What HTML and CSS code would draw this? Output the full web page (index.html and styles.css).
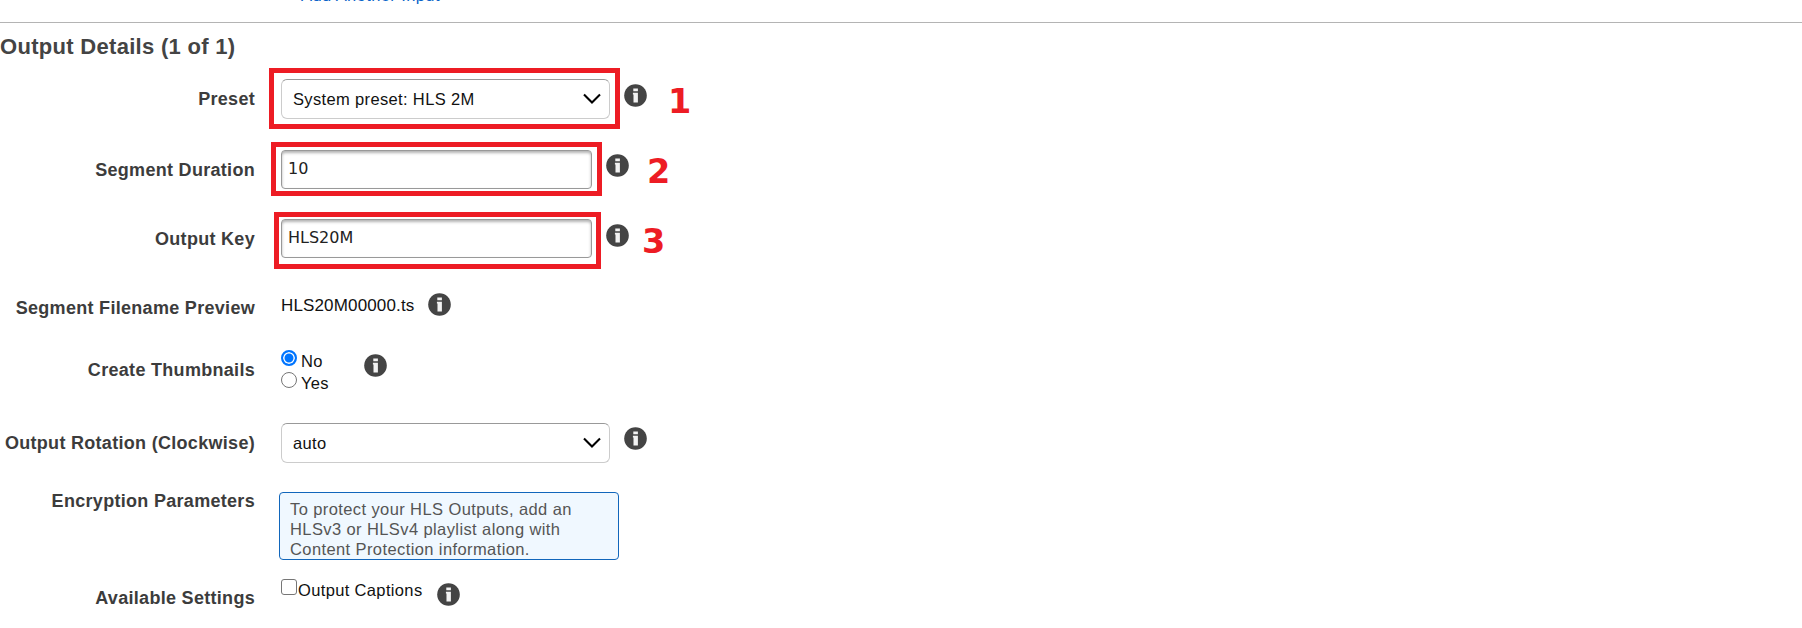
FILE: index.html
```html
<!DOCTYPE html>
<html lang="en">
<head>
<meta charset="utf-8">
<title>Output Details</title>
<link rel="stylesheet" href="styles.css">
</head>
<body>
<svg width="0" height="0" class="defs">
  <symbol id="info" viewBox="0 0 24 24">
    <circle cx="12" cy="12" r="11.8" fill="#444"/>
    <path d="M9.7 4.6h4.8v3H9.7zM9.3 9.2h5.2v10.2H9.9v-8.4h-.6z" fill="#f2f2f2"/>
  </symbol>
  <symbol id="chevron" viewBox="0 0 18 12">
    <path d="M1 1.5l8 8 8-8" fill="none" stroke="#000" stroke-width="2.1"/>
  </symbol>
</svg>
<header class="inputs"><a class="add-link">Add Another Input</a></header>
<main>
  <h2 class="title">Output Details (1 of 1)</h2>

  <div class="row preset">
    <label class="label">Preset</label>
    <div class="control">
      <div class="select"><span>System preset: HLS 2M</span><svg class="chevron"><use href="#chevron"/></svg></div>
      <svg class="info"><use href="#info"/></svg>
      <b class="step">1</b>
    </div>
    <i class="frame"></i>
  </div>

  <div class="row duration">
    <label class="label">Segment Duration</label>
    <div class="control">
      <div class="input">10</div>
      <svg class="info"><use href="#info"/></svg>
      <b class="step">2</b>
    </div>
    <i class="frame"></i>
  </div>

  <div class="row key">
    <label class="label">Output Key</label>
    <div class="control">
      <div class="input">HLS20M</div>
      <svg class="info"><use href="#info"/></svg>
      <b class="step">3</b>
    </div>
    <i class="frame"></i>
  </div>

  <div class="row filename">
    <label class="label">Segment Filename Preview</label>
    <div class="control">
      <span class="value">HLS20M00000.ts</span>
      <svg class="info"><use href="#info"/></svg>
    </div>
  </div>

  <div class="row thumbs">
    <label class="label">Create Thumbnails</label>
    <div class="control">
      <div class="options">
        <div class="option"><span class="radio checked"></span><span>No</span></div>
        <div class="option"><span class="radio"></span><span>Yes</span></div>
      </div>
      <svg class="info"><use href="#info"/></svg>
    </div>
  </div>

  <div class="row rotation">
    <label class="label">Output Rotation (Clockwise)</label>
    <div class="control">
      <div class="select"><span>auto</span><svg class="chevron"><use href="#chevron"/></svg></div>
      <svg class="info"><use href="#info"/></svg>
    </div>
  </div>

  <div class="row encryption">
    <label class="label">Encryption Parameters</label>
    <div class="control">
      <p class="notice">To protect your HLS Outputs, add an<br>HLSv3 or HLSv4 playlist along with<br>Content Protection information.</p>
    </div>
  </div>

  <div class="row settings">
    <label class="label">Available Settings</label>
    <div class="control">
      <span class="checkbox"></span><span class="caption">Output Captions</span>
      <svg class="info"><use href="#info"/></svg>
    </div>
  </div>
</main>
</body>
</html>
```

FILE: styles.css
```css
* { box-sizing: border-box; }
html, body { height: 100%; }
body {
  margin: 0;
  overflow: hidden;
  background: #fff;
  color: #111;
  font: 16.5px/20px "Liberation Sans", Arial, sans-serif;
  letter-spacing: .35px;
}
.defs { position: absolute; }
.inputs {
  display: flex;
  align-items: flex-start;
  height: 23px;
  padding-left: 301px;
  border-bottom: 1px solid #b4b4b4;
}
.add-link { display: block; margin-top: -15px; color: #0a63c9; letter-spacing: .4px; }
main { display: flex; flex-direction: column; }
.title {
  height: 45px;
  margin: 0;
  padding-top: 11px;
  font-size: 22px;
  line-height: 26px;
  letter-spacing: .3px;
  color: #444;
}
.row {
  position: relative;
  display: grid;
  grid-template-columns: 255px 1fr;
  column-gap: 26px;
  align-items: start;
}
.label {
  font-size: 18px;
  font-weight: bold;
  letter-spacing: .3px;
  color: #3c3c3c;
  text-align: right;
  white-space: nowrap;
}
.control { display: flex; align-items: flex-start; }
.info { flex: none; width: 23px; height: 23px; }
.select {
  display: flex;
  align-items: center;
  justify-content: space-between;
  width: 329px;
  height: 40px;
  padding: 0 8px 0 11px;
  border: 1px solid #ccc;
  border-top-color: #999;
  border-radius: 6px;
}
.chevron { width: 18px; height: 12px; }
.input {
  width: 311px;
  height: 39px;
  padding: 0 6px;
  border: 1px solid #999;
  border-radius: 4px;
  box-shadow: inset 0 2px 3px rgba(0, 0, 0, .3);
  font: 16px/36px "DejaVu Sans", Verdana, sans-serif;
  letter-spacing: 0;
  color: #222;
}
.step {
  font: bold 33.5px/36px "DejaVu Sans", Verdana, sans-serif;
  letter-spacing: 0;
  color: #ed1c24;
}
.frame { position: absolute; border: 5px solid #ed1c24; }

.preset { height: 74px; }
.preset .label { padding-top: 21px; }
.preset .control { padding-top: 11px; }
.preset .info { margin: 5px 0 0 14px; }
.preset .step { margin: 5px 0 0 21px; }
.preset .frame { left: 269px; top: 0; width: 351px; height: 61px; }

.duration { height: 70px; }
.duration .label { padding-top: 18px; }
.duration .control { padding-top: 8px; }
.duration .info { margin: 4px 0 0 14px; }
.duration .step { margin: 4px 0 0 18px; }
.duration .frame { left: 271px; top: 0; width: 331px; height: 54px; }

.key { height: 70px; }
.key .label { padding-top: 17px; }
.key .control { padding-top: 7px; }
.key .info { margin: 5px 0 0 14px; }
.key .step { margin: 5px 0 0 13px; }
.key .frame { left: 274px; top: 0; width: 327px; height: 57px; }

.filename { height: 58px; }
.filename .label { padding-top: 16px; }
.filename .control { padding-top: 14px; }
.filename .value { width: 147px; font-size: 17px; letter-spacing: .15px; }
.filename .info { margin-top: -3px; }

.thumbs { height: 72px; }
.thumbs .label { padding-top: 20px; }
.thumbs .control { padding-top: 10px; }
.thumbs .info { margin-top: 4px; }
.options { width: 83px; }
.option { display: flex; gap: 4px; height: 22px; }
.option span:last-child { padding-top: 1px; }
.radio {
  width: 16px;
  height: 16px;
  border: 1px solid #767676;
  border-radius: 50%;
}
.radio.checked {
  border: 2px solid #0075ff;
  background: #0075ff;
  box-shadow: inset 0 0 0 1.5px #fff;
}

.rotation { height: 70px; }
.rotation .label { padding-top: 21px; }
.rotation .control { padding-top: 11px; }
.rotation .info { margin: 4px 0 0 14px; }

.encryption { height: 93px; }
.encryption .label { padding-top: 9px; }
.notice {
  width: 340px;
  height: 68px;
  margin: 10px 0 0 -2px;
  padding: 6px 10px 0;
  border: 1px solid #1166bb;
  border-radius: 4px;
  background: #f0f8ff;
  color: #555;
  letter-spacing: .4px;
}

.settings .label { padding-top: 13px; }
.settings .control { padding-top: 4px; }
.checkbox { width: 16px; height: 16px; border: 1.4px solid #767676; border-radius: 3px; }
.caption { width: 140px; padding: 1px 0 0 1px; letter-spacing: .35px; }
.settings .info { margin-top: 4px; }
```
